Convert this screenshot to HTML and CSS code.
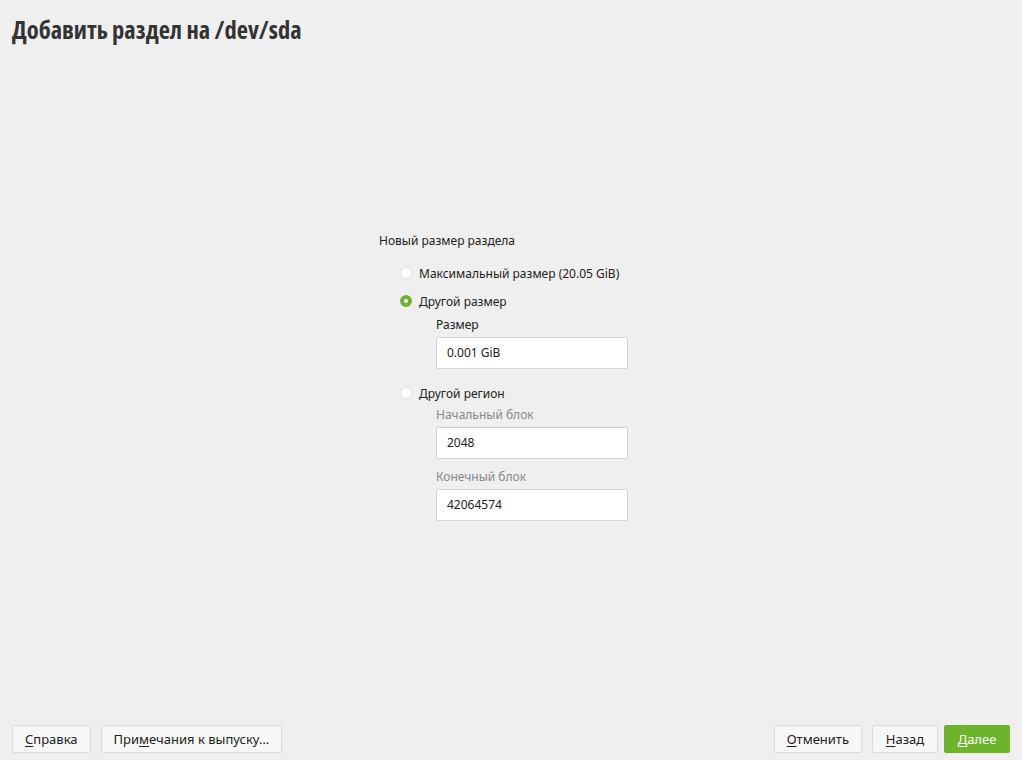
FILE: index.html
```html
<!DOCTYPE html>
<html lang="ru">
<head>
<meta charset="utf-8">
<link rel="stylesheet" href="styles.css">
</head>
<body>
<div class="page">
  <h1 class="title">Добавить раздел на /dev/sda</h1>
  <main class="main">
    <div class="form">
      <div class="group-label">Новый размер раздела</div>
      <div class="options">
        <label class="radio-row">
          <span class="radio"></span>
          <span>Максимальный размер (20.05 GiB)</span>
        </label>
        <label class="radio-row">
          <span class="radio checked"></span>
          <span>Другой размер</span>
        </label>
        <div class="sub first">
          <div class="field-label">Размер</div>
          <div class="input">0.001 GiB</div>
        </div>
        <label class="radio-row">
          <span class="radio"></span>
          <span>Другой регион</span>
        </label>
        <div class="sub second">
          <div class="field-label dim">Начальный блок</div>
          <div class="input">2048</div>
          <div class="field-label dim next">Конечный блок</div>
          <div class="input">42064574</div>
        </div>
      </div>
    </div>
  </main>
  <footer class="footer">
    <div class="btns">
      <button class="btn"><u>С</u>правка</button>
      <button class="btn">При<u>м</u>ечания к выпуску…</button>
    </div>
    <div class="btns right">
      <button class="btn"><u>О</u>тменить</button>
      <button class="btn"><u>Н</u>азад</button>
      <button class="btn primary"><u>Д</u>алее</button>
    </div>
  </footer>
</div>
</body>
</html>
```
FILE: styles.css
```css
html, body {
  margin: 0;
  padding: 0;
  height: 100%;
}
body {
  background: #efefef;
  font-family: "Noto Sans", "Open Sans", sans-serif;
  font-size: 12px;
  color: #222;
}
.page {
  display: flex;
  flex-direction: column;
  height: 760px;
}
.title {
  margin: 0;
  padding: 15px 0 0 12px;
  font-family: "Open Sans", sans-serif;
  font-weight: 700;
  font-size: 24.5px;
  font-stretch: 75%;
  line-height: 30px;
  color: #333;
  letter-spacing: 0;
}
.main {
  flex: 1;
  display: flex;
  justify-content: flex-start;
  padding: 188px 0 0 379px;
}
.form {
  display: flex;
  flex-direction: column;
}
.group-label {
  line-height: 16px;
  margin-bottom: 16px;
}
.options {
  padding-left: 21px;
  display: flex;
  flex-direction: column;
}
.radio-row {
  display: flex;
  align-items: center;
  gap: 7px;
  height: 16px;
  margin-bottom: 12px;
}
.radio {
  width: 12px;
  height: 12px;
  border-radius: 50%;
  background: #fff;
  box-sizing: border-box;
  border: 1px solid #e6e6e6;
  flex: none;
}
.radio.checked {
  background: #fff;
  border: 4px solid #6cb230;
}
.sub {
  padding-left: 36px;
  display: flex;
  flex-direction: column;
  margin-bottom: 16px;
}
.sub.first {
  margin-top: -4px;
}
.sub.second {
  margin-top: -6px;
}
.field-label {
  line-height: 16px;
  margin-bottom: 4px;
}
.field-label.dim {
  color: #888;
}
.field-label.next {
  margin-top: 10px;
}
.input {
  width: 192px;
  height: 32px;
  box-sizing: border-box;
  background: #fff;
  border: 1px solid #d3d3d3;
  border-radius: 2px;
  padding: 0 10px;
  line-height: 30px;
  font-size: 12px;
}
.footer {
  display: flex;
  justify-content: space-between;
  padding: 0 12px 7px 12px;
}
.btns {
  display: flex;
  gap: 10px;
}
.btns.right {
  gap: 6px;
}
.btns.right .btn:first-child {
  margin-right: 4px;
}
.btn {
  font-family: "Noto Sans", "Open Sans", sans-serif;
  font-size: 13px;
  color: #222;
  background: #f7f7f7;
  border: 1px solid #dcdcdc;
  border-radius: 2px;
  height: 28px;
  min-width: 66px;
  padding: 0 12px;
  box-sizing: border-box;
}
.btn u {
  text-decoration-thickness: 1px;
  text-underline-offset: 2px;
}
.btn.primary {
  background: #6cb52a;
  border-color: #6cb52a;
  color: #fff;
}
```
